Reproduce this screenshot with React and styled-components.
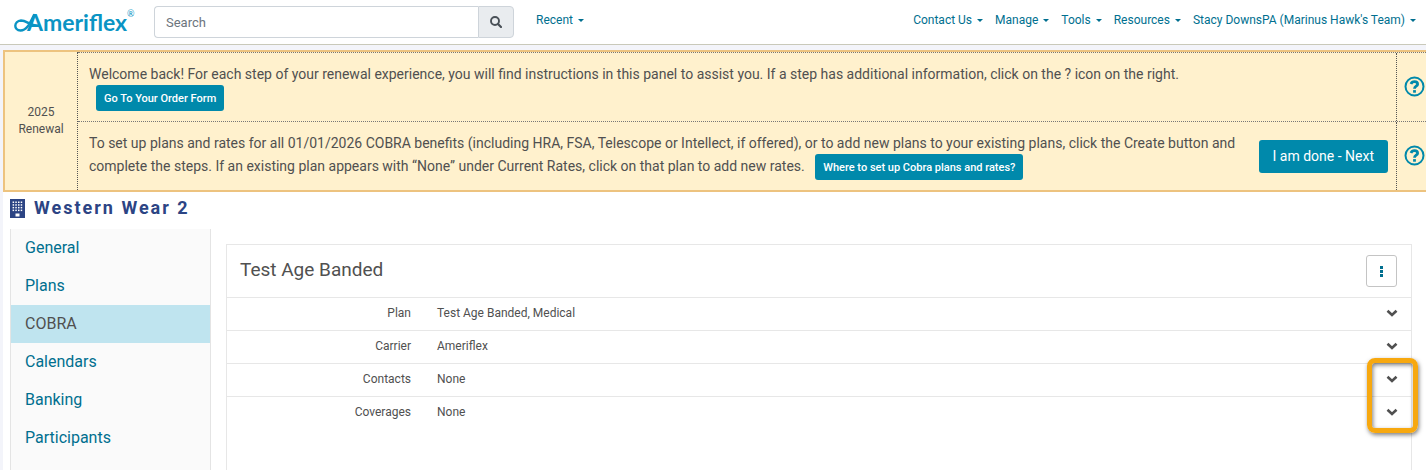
import React from "react";
import styled, { createGlobalStyle } from "styled-components";

const GlobalStyle = createGlobalStyle`
  *, *::before, *::after { box-sizing: border-box; }
  body {
    margin: 0;
    background: #f3f4fa;
    color: #505050;
    font-family: Roboto, "Liberation Sans", sans-serif;
    font-size: 12px;
    overflow-x: hidden;
  }
  button, input { font-family: inherit; }
  a { color: #006f8f; text-decoration: none; }
`;

const Page = styled.div`
  display: flex;
  flex-direction: column;
  min-height: 100vh;
`;

const TopBar = styled.header`
  display: flex;
  align-items: flex-start;
  background: #fff;
  border-bottom: 1px solid #c9c9ba;
  padding: 6px 10px 6px 14px;
`;

const LogoLink = styled.a`
  display: flex;
  width: 140px;
  flex: none;
`;

const SearchForm = styled.form`
  display: flex;
  width: 360px;
  height: 32px;
`;

const SearchInput = styled.input`
  flex: 1;
  min-width: 0;
  border: 1px solid #ced4da;
  border-right: 0;
  border-radius: 4px 0 0 4px;
  padding: 0 11px;
  font-size: 13px;
  color: #495057;
  &::placeholder { color: #6c757d; opacity: 1; }
`;

const SearchButton = styled.button`
  display: flex;
  align-items: center;
  justify-content: center;
  width: 36px;
  padding: 0;
  border: 1px solid #ced4da;
  border-radius: 0 4px 4px 0;
  background: #e9ecef;
  color: #495057;
`;

const Nav = styled.nav`
  display: flex;
  flex: 1;
  gap: 12px;
  margin-left: 22px;
  padding-top: 6px;
`;

const NavLink = styled.a`
  display: flex;
  align-items: center;
  gap: 5px;
  margin-left: ${(p) => (p.$push ? "auto" : "0")};
  line-height: 16px;
  white-space: nowrap;
  &::after {
    content: "";
    border: 3px solid transparent;
    border-top-color: currentColor;
    border-bottom: 0;
  }
`;

const Banner = styled.section`
  display: flex;
  margin: 5px 0 0 3px;
  border: 2px solid #edc37f;
  border-right: 0;
  background: #fff1cd;
`;

const BannerLabel = styled.div`
  display: flex;
  align-items: center;
  justify-content: center;
  width: 72px;
  flex: none;
  line-height: 17px;
  text-align: center;
`;

const BannerSteps = styled.div`
  flex: 1;
  border-left: 1px dotted #555;
`;

const Step = styled.div`
  display: flex;
  border-top: 1px dotted #777;
`;

const StepBody = styled.div`
  display: flex;
  flex: 1;
  align-items: center;
  gap: 16px;
  padding: 0 8px 0 11px;
`;

const StepText = styled.p`
  flex: 1;
  margin: 0;
  padding: 10px 0 12px;
  font-size: 14px;
  line-height: 23px;
`;

const StepHelp = styled.div`
  display: flex;
  align-items: center;
  justify-content: flex-end;
  width: 30px;
  flex: none;
  border-left: 1px dotted #555;
`;

const HelpButton = styled.button`
  display: flex;
  border: 0;
  padding: 0 1px 2px 0;
  background: none;
  color: #0089ab;
`;

const InlineButton = styled.button`
  height: 26px;
  margin: -3px 0 -3px 7px;
  padding: 0 8px;
  border: 0;
  border-radius: 3px;
  background: #0089ab;
  color: #fff;
  font-size: 11px;
  font-weight: 500;
  vertical-align: middle;
`;

const NextButton = styled.button`
  height: 33px;
  flex: none;
  padding: 0 14px;
  border: 0;
  border-radius: 3px;
  background: #0089ab;
  color: #fff;
  font-size: 14px;
`;

const Content = styled.main`
  display: flex;
  flex: 1;
  flex-direction: column;
  margin-left: 3px;
  padding: 4px 14px 0 7px;
  background: #fff;
`;

const CompanyTitle = styled.h1`
  display: flex;
  align-items: center;
  gap: 9px;
  margin: 0 0 9px;
  color: #2c4484;
  font-size: 18px;
  font-weight: 700;
  letter-spacing: 2px;
  line-height: 24px;
`;

const Columns = styled.div`
  display: flex;
  flex: 1;
  gap: 15px;
`;

const Sidebar = styled.nav`
  width: 201px;
  flex: none;
  border: solid #e4e4e4;
  border-width: 0 1px;
  background: #fafafa;
`;

const SideLink = styled.a`
  display: block;
  padding: 0 14px;
  font-size: 16px;
  line-height: 38px;
  color: ${(p) => (p.$active ? "#505050" : "#006f8f")};
  background: ${(p) => (p.$active ? "#bfe4ef" : "transparent")};
`;

const Card = styled.section`
  flex: 1;
  margin-top: 15px;
  border: 1px solid #e7e7e7;
  border-bottom: 0;
`;

const CardHeader = styled.header`
  display: flex;
  align-items: center;
  justify-content: space-between;
  height: 52px;
  padding: 0 14px 0 13px;
`;

const CardTitle = styled.h2`
  margin: 0 0 4px;
  font-size: 19px;
  font-weight: 400;
`;

const MenuButton = styled.button`
  display: flex;
  align-items: center;
  justify-content: center;
  width: 31px;
  height: 32px;
  padding: 0;
  border: 1px solid #c4c4c4;
  border-radius: 3px;
  background: #fff;
  color: #006f8f;
`;

const Row = styled.div`
  display: flex;
  align-items: center;
  height: 33px;
  padding: 0 13px 2px 0;
  border-top: 1px solid #e7e7e7;
`;

const RowLabel = styled.span`
  width: 184px;
  flex: none;
  text-align: right;
`;

const RowValue = styled.span`
  flex: 1;
  padding-left: 26px;
`;

const ToggleButton = styled.button`
  display: flex;
  padding: 0;
  border: 0;
  background: none;
  color: #505050;
`;

const Highlighted = styled.div`
  position: relative;
`;

const HighlightFrame = styled.div`
  position: absolute;
  top: -5px;
  right: -7px;
  bottom: -4px;
  width: 51px;
  border: 5px solid #f7a80f;
  border-radius: 8px;
  box-shadow: 1px 2px 4px rgba(0, 0, 0, 0.5), inset 1px 2px 4px rgba(0, 0, 0, 0.5);
  pointer-events: none;
`;

function Logo() {
  return (
    <svg width="122" height="30" viewBox="0 0 122 30" role="img" aria-label="Ameriflex">
      <path
        d="M25 19.500C17 20.500 13 14.500 7 14.500C-.500 15-.500 24.500 6.500 24.500C13 24.500 16 17 20 9"
        fill="none"
        stroke="#0a94c4"
        strokeWidth="2.400"
        strokeLinecap="round"
      />
      <g fill="#0a94c4" fontFamily="Lato, sans-serif">
        <text x="13" y="25" fontSize="23" fontWeight="700">Ameriflex</text>
        <text x="113" y="11" fontSize="9">®</text>
      </g>
    </svg>
  );
}

function SearchIcon() {
  return (
    <svg width="12" height="12" viewBox="0 0 12 12" fill="none" stroke="currentColor" aria-hidden="true">
      <circle cx="5" cy="5" r="4" strokeWidth="1.900" />
      <path d="M8 8L11 11" strokeWidth="2.200" strokeLinecap="round" />
    </svg>
  );
}

function HelpIcon() {
  return (
    <svg width="21" height="21" viewBox="0 0 21 21" fill="none" stroke="currentColor" aria-hidden="true">
      <circle cx="10.500" cy="10.500" r="9" strokeWidth="2" />
      <path d="M7 8C7.700 6.200 8.900 5.700 10.500 5.700C12.500 5.700 13.600 6.700 13.600 8.200C13.600 10.300 10.500 10.200 10.500 12.700" strokeWidth="2.800" />
      <path d="M9.100 15.400H11.900" strokeWidth="2.600" />
    </svg>
  );
}

function ChevronIcon() {
  return (
    <svg width="12" height="8" viewBox="0 0 12 8" aria-hidden="true">
      <path d="M1.500 1.800L6 6L10.500 1.800" fill="none" stroke="currentColor" strokeWidth="2.600" />
    </svg>
  );
}

function BuildingIcon() {
  const xs = [2.6, 5.3, 8, 10.7];
  const ys = [2.5, 5.2, 7.9, 10.6];
  return (
    <svg width="15" height="19" viewBox="0 0 15 19" aria-hidden="true">
      <path d="M0 0H15V19H0ZM5.500 14.500V17.500H9.500V14.500Z" fill="#2c4484" fillRule="evenodd" />
      {ys.map((y) => xs.map((x) => (
        <rect key={`${x}-${y}`} x={x} y={y} width="1.500" height="1.500" fill="#fff" />
      )))}
    </svg>
  );
}

function DotsIcon() {
  return (
    <svg width="3" height="11" viewBox="0 0 3 11" fill="currentColor" aria-hidden="true">
      <rect width="3" height="3" />
      <rect y="4" width="3" height="3" />
      <rect y="8" width="3" height="3" />
    </svg>
  );
}

function DetailRow({ label, value }) {
  return (
    <Row>
      <RowLabel>{label}</RowLabel>
      <RowValue>{value}</RowValue>
      <ToggleButton type="button" aria-label={`Expand ${label}`}><ChevronIcon /></ToggleButton>
    </Row>
  );
}

const accountLinks = ["Contact Us", "Manage", "Tools", "Resources", "Stacy DownsPA (Marinus Hawk's Team)"];
const sections = ["General", "Plans", "COBRA", "Calendars", "Banking", "Participants"];

export default function App() {
  return (
    <Page>
      <GlobalStyle />
      <TopBar>
        <LogoLink href="#home"><Logo /></LogoLink>
        <SearchForm role="search">
          <SearchInput type="text" placeholder="Search" aria-label="Search" />
          <SearchButton type="button" aria-label="Run search"><SearchIcon /></SearchButton>
        </SearchForm>
        <Nav>
          <NavLink href="#recent">Recent</NavLink>
          {accountLinks.map((name, i) => (
            <NavLink key={name} href="#menu" $push={i === 0}>{name}</NavLink>
          ))}
        </Nav>
      </TopBar>

      <Banner>
        <BannerLabel>2025<br />Renewal</BannerLabel>
        <BannerSteps>
          <Step>
            <StepBody>
              <StepText>
                Welcome back! For each step of your renewal experience, you will find instructions in this panel to assist you. If a step has additional information, click on the ? icon on the right.
                <br />
                <InlineButton type="button">Go To Your Order Form</InlineButton>
              </StepText>
            </StepBody>
            <StepHelp><HelpButton type="button" aria-label="Help"><HelpIcon /></HelpButton></StepHelp>
          </Step>
          <Step>
            <StepBody>
              <StepText>
                To set up plans and rates for all 01/01/2026 COBRA benefits (including HRA, FSA, Telescope or Intellect, if offered), or to add new plans to your existing plans, click the Create button and complete the steps. If an existing plan appears with “None” under Current Rates, click on that plan to add new rates.{" "}
                <InlineButton type="button">Where to set up Cobra plans and rates?</InlineButton>
              </StepText>
              <NextButton type="button">I am done - Next</NextButton>
            </StepBody>
            <StepHelp><HelpButton type="button" aria-label="Help"><HelpIcon /></HelpButton></StepHelp>
          </Step>
        </BannerSteps>
      </Banner>

      <Content>
        <CompanyTitle><BuildingIcon />Western Wear 2</CompanyTitle>
        <Columns>
          <Sidebar>
            {sections.map((name) => (
              <SideLink key={name} href={`#${name.toLowerCase()}`} $active={name === "COBRA"}>{name}</SideLink>
            ))}
          </Sidebar>
          <Card>
            <CardHeader>
              <CardTitle>Test Age Banded</CardTitle>
              <MenuButton type="button" aria-label="Plan actions"><DotsIcon /></MenuButton>
            </CardHeader>
            <DetailRow label="Plan" value="Test Age Banded, Medical" />
            <DetailRow label="Carrier" value="Ameriflex" />
            <Highlighted>
              <DetailRow label="Contacts" value="None" />
              <DetailRow label="Coverages" value="None" />
              <HighlightFrame />
            </Highlighted>
          </Card>
        </Columns>
      </Content>
    </Page>
  );
}
